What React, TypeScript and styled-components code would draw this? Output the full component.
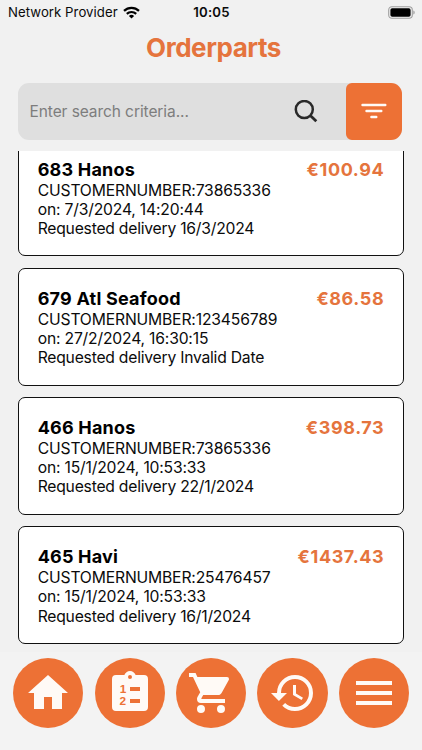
import React from 'react';
import styled, { createGlobalStyle } from 'styled-components';

const ORANGE = '#ed7135';

const GlobalStyle = createGlobalStyle`
  * { box-sizing: border-box; }
  body {
    margin: 0;
    background: #f1f1f1;
    font-family: Inter, 'Liberation Sans', sans-serif;
    color: #0b0b0b;
  }
`;

const Screen = styled.div`
  width: 422px;
  height: 750px;
  display: flex;
  flex-direction: column;
  overflow: hidden;
  background: #f1f1f1;
`;

const StatusBar = styled.div`
  height: 24px;
  flex: none;
  padding: 0 7px 0 8px;
  display: grid;
  grid-template-columns: 1fr auto 1fr;
  align-items: center;
  font-size: 13.2px;
  line-height: 24px;
`;

const Carrier = styled.div`
  display: flex;
  align-items: center;
  gap: 5px;
  letter-spacing: 0.05px;
  white-space: nowrap;
`;

const Clock = styled.div`
  font-weight: 600;
  letter-spacing: 0.25px;
`;

const BatterySlot = styled.div`
  display: flex;
  justify-content: flex-end;
`;

const Title = styled.h1`
  margin: 0;
  height: 59px;
  flex: none;
  padding-top: 8px;
  padding-left: 5px;
  text-align: center;
  font-size: 26px;
  line-height: 32px;
  font-weight: 700;
  letter-spacing: -0.45px;
  color: #e5743d;
`;

const SearchRow = styled.div`
  flex: none;
  display: flex;
  height: 57px;
  margin: 0 20px 11px 18px;
  border-radius: 11px;
  background: #dfdfdf;
`;

const SearchField = styled.div`
  flex: 1;
  display: flex;
  align-items: center;
  justify-content: space-between;
  padding: 0 28px 0 11.5px;
  font-size: 15.5px;
  letter-spacing: -0.08px;
  color: #7d7d7d;
`;

const FilterButton = styled.button`
  width: 56px;
  border: 0;
  padding: 0 0 1px;
  border-radius: 6px 11px 11px 6px;
  background: ${ORANGE};
  display: flex;
  align-items: center;
  justify-content: center;
`;

const OrderList = styled.div`
  flex: none;
  height: 501px;
  overflow: hidden;
  display: flex;
  flex-direction: column;
  justify-content: flex-end;
  gap: 11.2px;
  padding: 0 18px 8px;
`;

const OrderCard = styled.article`
  flex: none;
  height: 118px;
  border: 1.4px solid #111;
  border-radius: 7px;
  background: #fff;
  padding: 19.1px 19.3px 0 18.7px;
`;

const OrderHead = styled.div`
  display: flex;
  justify-content: space-between;
  font-size: 18px;
  line-height: 22px;
  font-weight: 700;
  letter-spacing: 0.2px;
  color: #000;
`;

const Price = styled.span`
  color: #e5743d;
  letter-spacing: 0.6px;
  margin-right: -0.6px;
`;

const OrderLine = styled.div<{ $spacing: number }>`
  font-size: 15.7px;
  line-height: 19.2px;
  letter-spacing: ${(p) => p.$spacing}px;
  white-space: nowrap;
`;

const NavBar = styled.nav`
  flex: 1;
  background: #f3f3f3;
  padding: 6px 12.8px 0 13.1px;
  display: flex;
  justify-content: space-between;
  align-items: flex-start;
`;

const NavButton = styled.button`
  width: 70.4px;
  height: 70.4px;
  border: 0;
  padding: 0;
  border-radius: 50%;
  background: ${ORANGE};
  display: flex;
  align-items: center;
  justify-content: center;
`;

const NavIcon = ({ children }: { children: React.ReactNode }) => (
  <svg width="48" height="48" viewBox="0 0 24 24" fill="#fffaf6">
    {children}
  </svg>
);

interface Order {
  name: string;
  price: string;
  customer: string;
  placed: string;
  delivery: string;
}

const orders: Order[] = [
  { name: '683 Hanos', price: '€100.94', customer: '73865336', placed: '7/3/2024, 14:20:44', delivery: '16/3/2024' },
  { name: '679 Atl Seafood', price: '€86.58', customer: '123456789', placed: '27/2/2024, 16:30:15', delivery: 'Invalid Date' },
  { name: '466 Hanos', price: '€398.73', customer: '73865336', placed: '15/1/2024, 10:53:33', delivery: '22/1/2024' },
  { name: '465 Havi', price: '€1437.43', customer: '25476457', placed: '15/1/2024, 10:53:33', delivery: '16/1/2024' },
];

export default function App() {
  return (
    <Screen>
      <GlobalStyle />
      <StatusBar>
        <Carrier>
          Network Provider
          <svg width="17" height="13" viewBox="0 0 17 13" fill="none" stroke="#000" strokeWidth="2.2">
            <path d="M1 4.9a10.8 10.8 0 0 1 15 0" />
            <path d="M3.8 7.9a6.8 6.8 0 0 1 9.4 0" />
            <path d="M8.5 12.5 5.9 9.9a3.8 3.8 0 0 1 5.2 0z" fill="#000" stroke="none" />
          </svg>
        </Carrier>
        <Clock>10:05</Clock>
        <BatterySlot>
          <svg width="27" height="13" viewBox="0 0 27 13">
            <rect x="0.7" y="0.7" width="23.6" height="11.6" rx="3.2" fill="none" stroke="#a0a0a0" strokeWidth="1.1" />
            <rect x="2.4" y="2.3" width="20.2" height="8.4" rx="1.8" fill="#000" />
            <path d="M25.3 4.5v4c.9-.3 1.4-1.1 1.4-2s-.5-1.7-1.4-2z" fill="#a0a0a0" />
          </svg>
        </BatterySlot>
      </StatusBar>
      <Title>Orderparts</Title>
      <SearchRow>
        <SearchField>
          <span>Enter search criteria...</span>
          <svg width="24" height="24" viewBox="0 0 24 24" fill="none" stroke="#292929" strokeWidth="2.5">
            <circle cx="10.3" cy="9.5" r="8.5" />
            <path d="M16.3 15.5 22.3 21.3" strokeWidth="2.8" />
          </svg>
        </SearchField>
        <FilterButton aria-label="Filter">
          <svg width="26" height="16" viewBox="0 0 26 16" stroke="#fffaf6" strokeWidth="2.4" strokeLinecap="round">
            <path d="M1.5 2h22.8M5.5 8h14.8M10.4 14h4.9" />
          </svg>
        </FilterButton>
      </SearchRow>
      <OrderList>
        {orders.map((o) => (
          <OrderCard key={o.name}>
            <OrderHead>
              <span>{o.name}</span>
              <Price>{o.price}</Price>
            </OrderHead>
            <OrderLine $spacing={-0.17}>CUSTOMERNUMBER:{o.customer}</OrderLine>
            <OrderLine $spacing={-0.19}>on: {o.placed}</OrderLine>
            <OrderLine $spacing={-0.23}>Requested delivery {o.delivery}</OrderLine>
          </OrderCard>
        ))}
      </OrderList>
      <NavBar>
        <NavButton aria-label="Home">
          <NavIcon>
            <path d="M10 20v-6h4v6h5v-8h3L12 3 2 12h3v8h5z" />
          </NavIcon>
        </NavButton>
        <NavButton aria-label="Orders">
          <NavIcon>
            <path
              fillRule="evenodd"
              d="M19 3h-4.18C14.4 1.84 13.3 1 12 1s-2.4.84-2.82 2H5a2 2 0 0 0-2 2v14a2 2 0 0 0 2 2h14a2 2 0 0 0 2-2V5a2 2 0 0 0-2-2zM12 3a1 1 0 1 1 0 2 1 1 0 0 1 0-2zM12 9h5v2h-5zM12 15h5v2h-5z"
            />
            <text fill={ORANGE} fontSize="5.9" fontWeight="700">
              <tspan x="6.9" y="12.1">1</tspan>
              <tspan x="6.8" y="18.1">2</tspan>
            </text>
          </NavIcon>
        </NavButton>
        <NavButton aria-label="Cart">
          <NavIcon>
            <path d="M17 18a2 2 0 1 1 0 4 2 2 0 0 1 0-4M1 2h3.27l.94 2H20a1 1 0 0 1 1 1c0 .17-.05.34-.12.5l-3.58 6.47c-.34.61-1 1.03-1.75 1.03H8.1l-.9 1.63-.03.12a.25.25 0 0 0 .25.25H19v2H7a2 2 0 0 1-2-2c0-.35.09-.68.24-.96l1.36-2.45L3 4H1V2m6 16a2 2 0 1 1 0 4 2 2 0 0 1 0-4z" />
          </NavIcon>
        </NavButton>
        <NavButton aria-label="History">
          <NavIcon>
            <path d="M13.5 8H12v5l4.28 2.54.72-1.21-3.5-2.08V8M13 3a9 9 0 0 0-9 9H1l3.96 4.03L9 12H6a7 7 0 0 1 7-7 7 7 0 0 1 7 7 7 7 0 0 1-7 7c-1.93 0-3.68-.79-4.94-2.06l-1.42 1.42A8.896 8.896 0 0 0 13 21a9 9 0 0 0 9-9 9 9 0 0 0-9-9" />
          </NavIcon>
        </NavButton>
        <NavButton aria-label="Menu">
          <NavIcon>
            <path d="M3 6h18v2H3V6m0 5h18v2H3v-2m0 5h18v2H3v-2z" />
          </NavIcon>
        </NavButton>
      </NavBar>
    </Screen>
  );
}
